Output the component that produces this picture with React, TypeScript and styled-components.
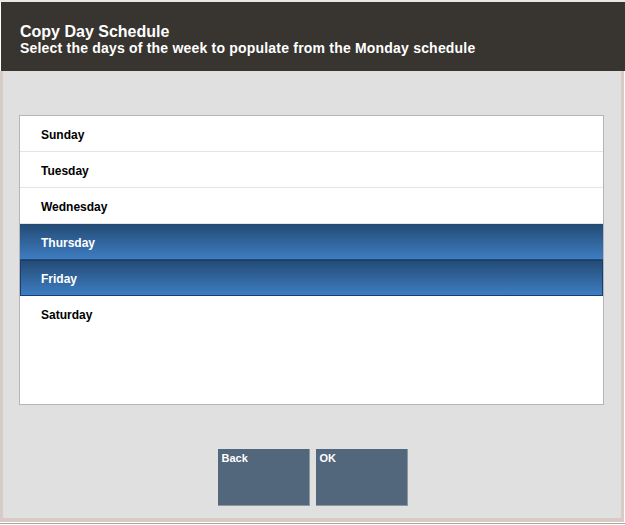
import React from "react";
import styled, { createGlobalStyle } from "styled-components";

const Global = createGlobalStyle`
  html, body { margin: 0; padding: 0; background: #ffffff; }
  body { font-family: "Liberation Sans", Arial, sans-serif; }
`;

const Frame = styled.div`
  width: 625px;
  height: 525px;
  box-sizing: border-box;
  border-top: 2px solid #e8e6e4;
  display: flex;
  flex-direction: column;
`;

const Header = styled.header`
  height: 69px;
  box-sizing: border-box;
  background: #38342f;
  color: #ffffff;
  padding: 21px 0 0 19px;
  margin-left: 1px;
  font-weight: bold;
`;

const Title = styled.div`
  font-size: 16px;
  line-height: 17px;
`;

const Subtitle = styled.div`
  font-size: 14px;
  line-height: 16px;
  letter-spacing: 0.2px;
`;

const Panel = styled.main`
  flex: 1;
  background: #e0e0e0;
  border-left: 3px solid #d6ccc5;
  border-right: 3px solid #d6ccc5;
  border-bottom: 4px solid #d6ccc5;
  margin: 0 1px 0 0;
  padding: 44px 17px 12px 16px;
  display: flex;
  flex-direction: column;
`;

const List = styled.ul`
  list-style: none;
  margin: 0;
  padding: 0;
  height: 290px;
  box-sizing: border-box;
  background: #ffffff;
  border: 1px solid #b4b4bc;
`;

const Row = styled.li<{ $selected?: boolean; $focused?: boolean }>`
  height: 36px;
  box-sizing: border-box;
  display: flex;
  align-items: center;
  padding: 2px 0 0 21px;
  font-size: 12px;
  font-weight: bold;
  color: ${(p) => (p.$selected ? "#ffffff" : "#000000")};
  background: ${(p) =>
    p.$selected ? "linear-gradient(#234a74, #3e7dc2)" : "#ffffff"};
  border-bottom: 1px solid ${(p) => (p.$selected ? "#1f4a78" : "#e4e4e4")};
  ${(p) => (p.$focused ? "outline: 1px solid #163f6b; outline-offset: -1px;" : "")}
  &:last-child { border-bottom: none; }
`;

const Buttons = styled.div`
  margin-top: auto;
  display: flex;
  justify-content: center;
  gap: 6px;
  padding-left: 2px;
`;

const Button = styled.button`
  width: 92px;
  height: 57px;
  box-sizing: border-box;
  background: #52667c;
  border: none;
  border-right: 1px solid #8e96a0;
  border-bottom: 1px solid #8e96a0;
  color: #ffffff;
  font-family: "Liberation Sans", Arial, sans-serif;
  font-weight: bold;
  font-size: 11px;
  text-align: left;
  padding: 3px 0 0 4px;
  display: flex;
  align-items: flex-start;
`;

const Bottom = styled.div`
  height: 1px;
  background: #a8a8a8;
  margin: 1px 0 1px;
`;

const days = [
  { name: "Sunday" },
  { name: "Tuesday" },
  { name: "Wednesday" },
  { name: "Thursday", selected: true },
  { name: "Friday", selected: true, focused: true },
  { name: "Saturday" },
];

export default function App() {
  return (
    <>
      <Global />
      <Frame>
        <Header>
          <Title>Copy Day Schedule</Title>
          <Subtitle>Select the days of the week to populate from the Monday schedule</Subtitle>
        </Header>
        <Panel>
          <List>
            {days.map((d) => (
              <Row key={d.name} $selected={d.selected} $focused={d.focused}>
                {d.name}
              </Row>
            ))}
          </List>
          <Buttons>
            <Button>Back</Button>
            <Button>OK</Button>
          </Buttons>
        </Panel>
        <Bottom />
      </Frame>
    </>
  );
}
